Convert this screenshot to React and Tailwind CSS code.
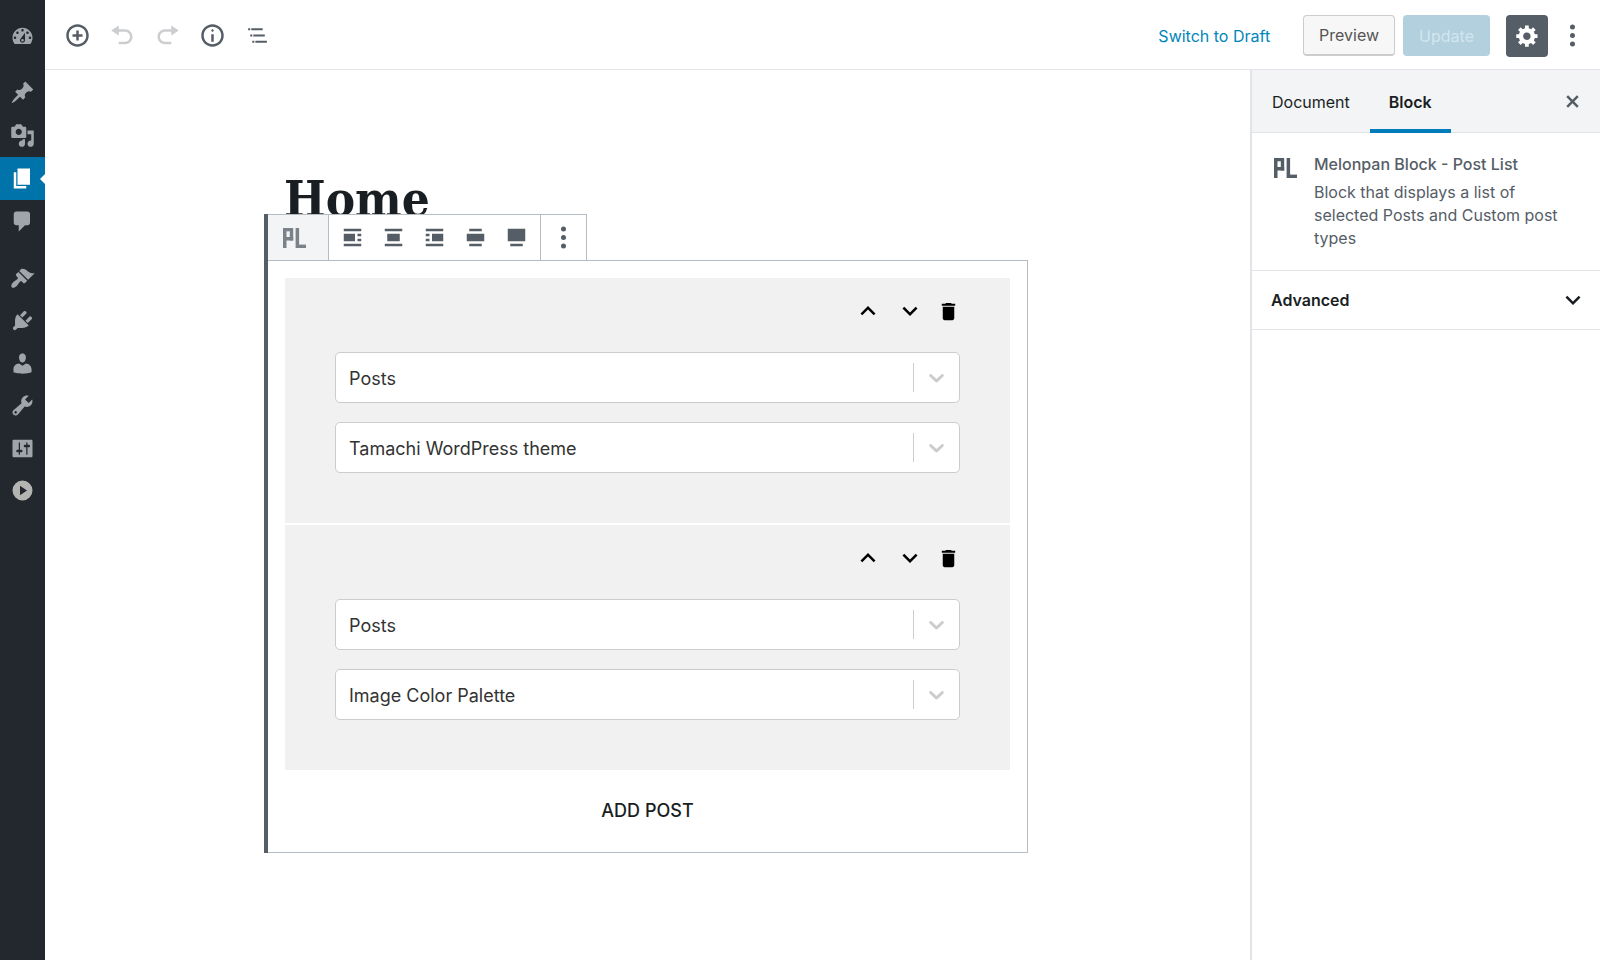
const ICONS = {
  dashboard:
    "M3.76 16h12.48c1.1-1.37 1.76-3.11 1.76-5 0-4.42-3.58-8-8-8s-8 3.58-8 8c0 1.89.66 3.63 1.76 5zM10 4c.55 0 1 .45 1 1s-.45 1-1 1-1-.45-1-1 .45-1 1-1zM6 6c.55 0 1 .45 1 1s-.45 1-1 1-1-.45-1-1 .45-1 1-1zm8 0c.55 0 1 .45 1 1s-.45 1-1 1-1-.45-1-1 .45-1 1-1zm-5.37 5.55L12 7v6c0 1.1-.9 2-2 2s-2-.9-2-2c0-.57.24-1.08.63-1.45zM4 10c.55 0 1 .45 1 1s-.45 1-1 1-1-.45-1-1 .45-1 1-1zm12 0c.55 0 1 .45 1 1s-.45 1-1 1-1-.45-1-1 .45-1 1-1zm-5 3c0-.55-.45-1-1-1s-1 .45-1 1 .45 1 1 1 1-.45 1-1z",
  post: "M10.44 3.02l1.82-1.82 6.36 6.35-1.83 1.82c-1.05-.68-2.48-.57-3.41.36l-.75.75c-.92.93-1.04 2.35-.35 3.41l-1.83 1.82-2.41-2.41-2.8 2.79c-.42.42-3.38 2.71-3.8 2.29s1.86-3.39 2.28-3.81l2.79-2.79L4.1 9.36l1.83-1.82c1.05.69 2.48.57 3.4-.36l.75-.75c.93-.92 1.05-2.35.36-3.41z",
  media:
    "M13 11V4c0-.55-.45-1-1-1h-1.67L9 1H5L3.67 3H2c-.55 0-1 .45-1 1v7c0 .55.45 1 1 1h10c.55 0 1-.45 1-1zM7 4.5c1.38 0 2.5 1.12 2.5 2.5S8.38 9.5 7 9.5 4.5 8.38 4.5 7 5.62 4.5 7 4.5zM14 6h5v10.5c0 1.38-1.12 2.5-2.5 2.5S14 17.88 14 16.5s1.12-2.5 2.5-2.5c.17 0 .34.02.5.05V9h-3V6zm-4 8.05V13h2v3.5c0 1.38-1.12 2.5-2.5 2.5S7 17.88 7 16.5 8.12 14 9.5 14c.17 0 .34.02.5.05z",
  page: "M6 15V2h10v13H6zm-1 1h8v2H3V5h2v11z",
  comments:
    "M5 2h9c1.1 0 2 .9 2 2v7c0 1.1-.9 2-2 2h-2l-5 5v-5H5c-1.1 0-2-.9-2-2V4c0-1.1.9-2 2-2z",
  appearance:
    "M14.48 11.06L7.41 3.99l1.5-1.5c.5-.56 2.3-.47 3.51.32 1.21.8 1.43 1.28 2.91 2.1 1.18.64 2.45 1.26 4.45.85zm-.71.71L6.7 4.7 4.93 6.47c-.39.39-.39 1.02 0 1.41l1.06 1.06c.39.39.39 1.03 0 1.42-.6.6-1.43 1.11-2.21 1.69-.35.26-.7.53-1.01.84C1.43 14.23.4 16.08 1.4 17.07c.99 1 2.84-.03 4.18-1.36.31-.31.58-.66.85-1.02.57-.78 1.08-1.61 1.69-2.21.39-.39 1.02-.39 1.41 0l1.06 1.06c.39.39 1.02.39 1.41 0z",
  plugins:
    "M13.11 4.36L9.87 7.6 8 5.73l3.24-3.24c.35-.34 1.05-.2 1.56.32.52.51.66 1.21.31 1.55zm-8 1.77l.91-1.12 9.01 9.01-1.19.84c-.71.71-2.63 1.16-3.82 1.16H6.14L4.9 17.26c-.59.59-1.54.59-2.12 0-.59-.58-.59-1.53 0-2.12l1.24-1.24v-3.88c0-1.13.4-3.19 1.09-3.89zm7.26 3.97l3.24-3.24c.34-.35 1.04-.21 1.55.31.52.51.66 1.21.31 1.55l-3.24 3.25z",
  users:
    "M10 9.25c-2.27 0-2.73-3.44-2.73-3.44C7 4.02 7.82 2 9.97 2c2.16 0 2.98 2.02 2.71 3.81 0 0-.41 3.44-2.68 3.44zm0 2.57L12.72 10c2.39 0 4.52 2.33 4.52 4.53v2.49s-3.65 1.13-7.24 1.13c-3.65 0-7.24-1.13-7.24-1.13v-2.49c0-2.25 1.94-4.48 4.47-4.48z",
  tools:
    "M16.68 9.77c-1.34 1.34-3.3 1.67-4.95.99l-5.41 6.52c-.99.99-2.59.99-3.58 0s-.99-2.59 0-3.57l6.52-5.42c-.68-1.65-.35-3.61.99-4.95 1.28-1.28 3.12-1.62 4.72-1.06l-2.89 2.89 2.82 2.82 2.86-2.87c.53 1.58.18 3.39-1.08 4.65zM3.81 16.21c.4.39 1.04.39 1.43 0 .4-.4.4-1.04 0-1.43-.39-.4-1.03-.4-1.43 0-.39.39-.39 1.03 0 1.43z",
  settings:
    "M18 16V4c0-.55-.45-1-1-1H3c-.55 0-1 .45-1 1v12c0 .55.45 1 1 1h14c.55 0 1-.45 1-1zM8 11h1c.55 0 1 .45 1 1s-.45 1-1 1H8v1.5c0 .28-.22.5-.5.5s-.5-.22-.5-.5V13H6c-.55 0-1-.45-1-1s.45-1 1-1h1V5.5c0-.28.22-.5.5-.5s.5.22.5.5V11zm5-2h-1c-.55 0-1-.45-1-1s.45-1 1-1h1V5.5c0-.28.22-.5.5-.5s.5.22.5.5V7h1c.55 0 1 .45 1 1s-.45 1-1 1h-1v5.5c0 .28-.22.5-.5.5s-.5-.22-.5-.5V9z",
  collapse: "M10 2a8 8 0 1 0 0 16a8 8 0 0 0 0-16zM8 6.2l5.6 3.8L8 13.8z",
  insert:
    "M10 1c-5 0-9 4-9 9s4 9 9 9 9-4 9-9-4-9-9-9zm0 16c-3.9 0-7-3.1-7-7s3.1-7 7-7 7 3.1 7 7-3.1 7-7 7zm1-11H9v3H6v2h3v3h2v-3h3V9h-3V6z",
  undo: "M12 5H7V2L1 6l6 4V7h5c2.2 0 4 1.8 4 4s-1.8 4-4 4H7v2h5c3.3 0 6-2.7 6-6s-2.7-6-6-6z",
  redo: "M8 5h5V2l6 4-6 4V7H8c-2.2 0-4 1.8-4 4s1.8 4 4 4h5v2H8c-3.3 0-6-2.7-6-6s2.7-6 6-6z",
  info: "M9 15h2V9H9v6zm1-10c-.5 0-1 .5-1 1s.5 1 1 1 1-.5 1-1-.5-1-1-1zm0-4c-5 0-9 4-9 9s4 9 9 9 9-4 9-9-4-9-9-9zm0 16c-3.9 0-7-3.1-7-7s3.1-7 7-7 7 3.1 7 7-3.1 7-7 7z",
  outline:
    "M5 5H3v2h2V5zm3 8h11v-2H8v2zm9-8H6v2h11V5zM7 11H5v2h2v-2zm0 8h2v-2H7v2zm3-2v2h11v-2H10z",
  gear: "M18 12h-2.18c-.17.7-.44 1.35-.81 1.93l1.54 1.54-2.1 2.1-1.54-1.54c-.58.36-1.23.63-1.91.79V19H8v-2.18c-.68-.16-1.33-.43-1.91-.79l-1.54 1.54-2.12-2.12 1.54-1.54c-.36-.58-.63-1.23-.79-1.91H1V9.03h2.17c.16-.7.44-1.35.8-1.94L2.43 5.55l2.1-2.1 1.54 1.54c.58-.37 1.24-.64 1.93-.81V2h3v2.18c.68.16 1.33.43 1.91.79l1.54-1.54 2.12 2.12-1.54 1.54c.36.59.64 1.24.8 1.94H18V12zm-8.5 1.5c1.66 0 3-1.34 3-3s-1.34-3-3-3-3 1.34-3 3 1.34 3 3 3z",
  close:
    "M14.95 6.46L11.41 10l3.54 3.54-1.41 1.41L10 11.42l-3.53 3.53-1.42-1.42L8.58 10 5.05 6.47l1.42-1.42L10 8.58l3.54-3.53z",
  more: "M10 1.2a2 2 0 1 0 0 4a2 2 0 0 0 0-4zM10 8a2 2 0 1 0 0 4a2 2 0 0 0 0-4zM10 14.8a2 2 0 1 0 0 4a2 2 0 0 0 0-4z",
  alignLeft:
    "M3 5h14V3H3v2zm9 8V7H3v6h9zm2-4h3V7h-3v2zm0 4h3v-2h-3v2zM3 17h14v-2H3v2z",
  alignCenter: "M3 5h14V3H3v2zm12 8V7H5v6h10zM3 17h14v-2H3v2z",
  alignRight:
    "M3 5h14V3H3v2zm0 4h3V7H3v2zm14 4V7H8v6h9zM3 13h3v-2H3v2zm0 4h14v-2H3v2z",
  alignWide: "M5 5h10V3H5v2zm12 8V7H3v6h14zM5 17h10v-2H5v2z",
  alignFull: "M17 13V3H3v10h14zM5 17h10v-2H5v2z",
  up: "M12 8l-6 6 1.41 1.41L12 10.83l4.59 4.58L18 14z",
  down: "M7.41 8.59L12 13.17l4.59-4.58L18 10l-6 6-6-6 1.41-1.41z",
  trash: "M6 19c0 1.1.9 2 2 2h8c1.1 0 2-.9 2-2V7H6v12zM19 4h-3.5l-1-1h-5l-1 1H5v2h14V4z",
  chevron:
    "M4.516 7.548c0.436-0.446 1.043-0.481 1.576 0l3.908 3.747 3.908-3.747c0.533-0.481 1.141-0.446 1.574 0 0.436 0.445 0.408 1.197 0 1.615-0.406 0.418-4.695 4.502-4.695 4.502-0.217 0.223-0.502 0.335-0.787 0.335s-0.57-0.112-0.789-0.335c0 0-4.287-4.084-4.695-4.502s-0.436-1.17 0-1.615z",
};

function Icon({ name, size = 20, className = "size-[25px]" }) {
  return (
    <svg
      viewBox={`0 0 ${size} ${size}`}
      className={`shrink-0 fill-current ${className}`}
      aria-hidden="true"
    >
      <path fillRule={name === "collapse" ? "evenodd" : "nonzero"} d={ICONS[name]} />
    </svg>
  );
}

function BlockIcon() {
  return (
    <svg viewBox="0 0 23 20" className="h-5 w-[23px] shrink-0 fill-current" aria-hidden="true">
      <rect x="0" y="0" width="3.5" height="20" />
      <rect x="3" y="0" width="7" height="3.3" />
      <rect x="6.8" y="0" width="3.4" height="12.5" />
      <rect x="3" y="9" width="7.2" height="3.5" />
      <rect x="12.6" y="0" width="3.5" height="20" />
      <rect x="16" y="16.6" width="7" height="3.4" />
    </svg>
  );
}

function NavLink({ name, label, active }) {
  return (
    <a
      href="#"
      aria-label={label}
      className={`relative flex flex-1 items-center justify-center ${
        active ? "bg-[#0073aa] text-white" : "text-[#a0a5aa]"
      }`}
    >
      <Icon name={name} />
      {active && (
        <span className="absolute top-1/2 right-0 -translate-y-1/2 border-y-[5px] border-r-[5px] border-y-transparent border-r-white" />
      )}
    </a>
  );
}

function AdminMenu() {
  return (
    <nav className="flex w-[45px] shrink-0 flex-col gap-3.5 bg-[#23282e] pt-[15px]">
      <div className="flex h-[42px]">
        <NavLink name="dashboard" label="Dashboard" />
      </div>
      <div className="flex h-[172px] flex-col">
        <NavLink name="post" label="Posts" />
        <NavLink name="media" label="Media" />
        <NavLink name="page" label="Pages" active />
        <NavLink name="comments" label="Comments" />
      </div>
      <div className="flex h-[255px] flex-col">
        <NavLink name="appearance" label="Appearance" />
        <NavLink name="plugins" label="Plugins" />
        <NavLink name="users" label="Users" />
        <NavLink name="tools" label="Tools" />
        <NavLink name="settings" label="Settings" />
        <button
          type="button"
          aria-label="Collapse menu"
          className="flex flex-1 items-center justify-center text-[#b4b4b2]"
        >
          <Icon name="collapse" />
        </button>
      </div>
    </nav>
  );
}

function ToolButton({ name, label, size, disabled }) {
  return (
    <button
      type="button"
      aria-label={label}
      disabled={disabled}
      className={`flex size-[45px] items-center justify-center ${
        disabled ? "text-[#cbcdcf]" : "text-[#555d66]"
      }`}
    >
      <Icon name={name} size={size} />
    </button>
  );
}

function Header() {
  return (
    <header className="flex h-[70px] shrink-0 items-center justify-between border-b border-[#e2e4e7] pt-0.5 pr-1 pl-2.5">
      <div className="flex">
        <ToolButton name="insert" label="Add block" />
        <ToolButton name="undo" label="Undo" disabled />
        <ToolButton name="redo" label="Redo" disabled />
        <ToolButton name="info" label="Content structure" />
        <ToolButton name="outline" label="Block navigation" size={24} />
      </div>
      <div className="flex items-center">
        <button type="button" className="mr-[33px] text-base text-[#0085ba]">
          Switch to Draft
        </button>
        <button
          type="button"
          className="mr-2 h-[41px] rounded-[4px] border border-b-2 border-[#cccccc] bg-[#f7f7f7] px-[15px] text-base text-[#555555]"
        >
          Preview
        </button>
        <button
          type="button"
          disabled
          className="mr-4 h-[41px] rounded-[4px] bg-[#b2d0dd] px-4 text-base text-[#d2e6ef]"
        >
          Update
        </button>
        <button
          type="button"
          aria-label="Settings"
          className="flex size-[42px] items-center justify-center rounded-[4px] bg-[#555d66] text-white"
        >
          <Icon name="gear" />
        </button>
        <button
          type="button"
          aria-label="More tools"
          className="flex h-[42px] w-12 items-center justify-center text-[#555d66]"
        >
          <Icon name="more" />
        </button>
      </div>
    </header>
  );
}

function SelectField({ label, value }) {
  return (
    <div className="relative">
      <select
        aria-label={label}
        defaultValue={value}
        className="block h-[51px] w-full appearance-none rounded-[5px] border border-[#cccccc] bg-white px-[13px] pt-0.5 text-lg text-[#333333]"
      >
        <option>{value}</option>
      </select>
      <span className="pointer-events-none absolute inset-y-[11px] right-0 flex w-[47px] items-center justify-center border-l border-[#cccccc] pr-0.5 text-[#cccccc]">
        <Icon name="chevron" />
      </span>
    </div>
  );
}

function PostCard({ title }) {
  return (
    <div className="bg-[#f1f1f1] px-[50px] pb-[50px]">
      <div className="-mr-1.5 flex h-[74px] items-center justify-end pb-2 text-black">
        <button type="button" aria-label="Move up" className="flex w-[42px] justify-center">
          <Icon name="up" size={24} className="size-[30px]" />
        </button>
        <button type="button" aria-label="Move down" className="flex w-[42px] justify-center">
          <Icon name="down" size={24} className="size-[30px]" />
        </button>
        <button type="button" aria-label="Delete" className="flex w-[35px] justify-center">
          <Icon name="trash" size={24} className="size-[23px]" />
        </button>
      </div>
      <div className="flex flex-col gap-[19px]">
        <SelectField label="Post type" value="Posts" />
        <SelectField label="Post" value={title} />
      </div>
    </div>
  );
}

function AlignButton({ name, label }) {
  return (
    <button
      type="button"
      aria-label={label}
      className="flex w-[41px] items-center justify-center text-[#555d66]"
    >
      <Icon name={name} />
    </button>
  );
}

function BlockToolbar() {
  return (
    <div className="absolute bottom-full left-0 flex h-[47px] border border-l-0 border-[#b5bcc2] bg-white">
      <button
        type="button"
        aria-label="Change block type"
        className="flex w-[61px] items-center justify-center border-r border-[#b5bcc2] bg-[#f3f4f5] pr-2 text-[#7b828a]"
      >
        <BlockIcon />
      </button>
      <div className="flex border-r border-[#b5bcc2] px-[3px]">
        <AlignButton name="alignLeft" label="Align left" />
        <AlignButton name="alignCenter" label="Align center" />
        <AlignButton name="alignRight" label="Align right" />
        <AlignButton name="alignWide" label="Wide width" />
        <AlignButton name="alignFull" label="Full width" />
      </div>
      <button
        type="button"
        aria-label="More options"
        className="flex w-[45px] items-center justify-center text-[#555d66]"
      >
        <Icon name="more" />
      </button>
    </div>
  );
}

function Editor() {
  return (
    <main className="flex flex-1 justify-center pt-24 pr-[3px]">
      <div className="w-full max-w-[764px]">
        <h1 className="h-[94px] pl-5 font-['DejaVu_Serif_Condensed','DejaVu_Serif',serif] text-[49px] leading-[66px] font-bold text-[#191e23]">
          Home
        </h1>
        <section className="flex">
          <div className="-mt-[46px] w-1 shrink-0 bg-[#555d66]" />
          <div className="relative flex-1 border border-l-0 border-[#b5bcc2] px-[17px] pt-[17px]">
            <BlockToolbar />
            <div className="flex flex-col gap-0.5">
              <PostCard title="Tamachi WordPress theme" />
              <PostCard title="Image Color Palette" />
            </div>
            <button
              type="button"
              className="flex h-[82px] w-full items-center justify-center text-lg font-medium text-[#191e23]"
            >
              ADD POST
            </button>
          </div>
        </section>
      </div>
    </main>
  );
}

function SettingsPanel() {
  return (
    <aside className="w-[350px] shrink-0 border-l-2 border-[#e2e4e7] text-base">
      <div className="flex h-[63px] items-stretch border-b border-[#e2e4e7] bg-[#f3f4f5] text-[#191e23]">
        <button type="button" className="-mb-px px-5">
          Document
        </button>
        <button
          type="button"
          className="-mb-px border-y-4 border-t-transparent border-b-[#007cba] px-[19px] font-semibold"
        >
          Block
        </button>
        <button type="button" aria-label="Close settings" className="mr-[15px] ml-auto text-[#555d66]">
          <Icon name="close" />
        </button>
      </div>
      <div className="flex gap-[17px] border-b border-[#e2e4e7] px-[22px] py-5 text-[#555d66]">
        <div className="pt-[5px]">
          <BlockIcon />
        </div>
        <div>
          <h2 className="mb-[5px] leading-[23px] font-medium">Melonpan Block - Post List</h2>
          <p className="leading-[23px]">
            Block that displays a list of selected Posts and Custom post types
          </p>
        </div>
      </div>
      <button
        type="button"
        className="flex h-[59px] w-full items-center justify-between border-b border-[#e2e4e7] pr-3 pl-[19px] font-semibold text-[#191e23]"
      >
        Advanced
        <Icon name="down" size={24} className="size-[30px]" />
      </button>
    </aside>
  );
}

export default function App() {
  return (
    <div className="flex min-h-screen bg-white font-['Inter','Liberation_Sans',sans-serif]">
      <AdminMenu />
      <div className="flex min-w-0 flex-1 flex-col">
        <Header />
        <div className="flex flex-1">
          <Editor />
          <SettingsPanel />
        </div>
      </div>
    </div>
  );
}
